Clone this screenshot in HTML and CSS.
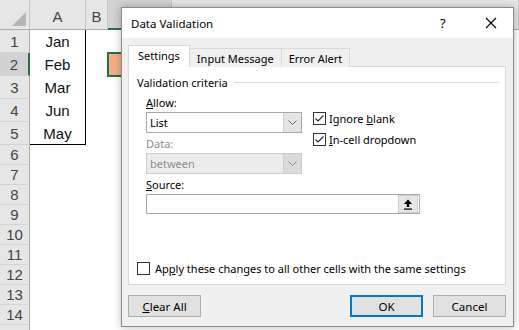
FILE: index.html
```html
<!DOCTYPE html>
<html>
  <head>
    <meta charset="utf-8" />
    <title>Data Validation</title>
    <link rel="stylesheet" href="styles.css">
  </head>
  <body>
    <div class="sheet">
      <div class="row head">
        <div class="corner"><span class="corner-mark"></span></div>
        <div class="colhead">A</div>
        <div class="colhead">B</div>
        <div class="colhead sel"></div>
        <div class="colhead"></div>
      </div>
      <div class="row tall">
        <div class="rowhead">1</div><div class="cell list">Jan</div><div class="cell"></div><div class="cell"></div>
      </div>
      <div class="row tall">
        <div class="rowhead sel">2</div><div class="cell list">Feb</div><div class="cell"></div><div class="cell active"></div>
      </div>
      <div class="row tall">
        <div class="rowhead">3</div><div class="cell list">Mar</div><div class="cell"></div><div class="cell"></div>
      </div>
      <div class="row tall">
        <div class="rowhead">4</div><div class="cell list">Jun</div><div class="cell"></div><div class="cell"></div>
      </div>
      <div class="row tall">
        <div class="rowhead">5</div><div class="cell list last">May</div><div class="cell"></div><div class="cell"></div>
      </div>
      <div class="row"><div class="rowhead">6</div></div>
      <div class="row"><div class="rowhead">7</div></div>
      <div class="row"><div class="rowhead">8</div></div>
      <div class="row"><div class="rowhead">9</div></div>
      <div class="row"><div class="rowhead">10</div></div>
      <div class="row"><div class="rowhead">11</div></div>
      <div class="row"><div class="rowhead">12</div></div>
      <div class="row"><div class="rowhead">13</div></div>
      <div class="row"><div class="rowhead">14</div></div>
      <div class="row"><div class="rowhead"></div></div>
    </div>

    <div class="dialog">
      <div class="titlebar">
        <span class="title">Data Validation</span>
        <span class="help">?</span>
        <span class="close">
          <svg width="12" height="12" viewBox="0 0 12 12"><path d="M1 1 L11 11 M11 1 L1 11" stroke="#000" stroke-width="1.1" fill="none"/></svg>
        </span>
      </div>
      <div class="content">
        <div class="tabs">
          <div class="tab active">Settings</div>
          <div class="tab">Input Message</div>
          <div class="tab">Error Alert</div>
        </div>
        <div class="panel">
          <div class="group-title"><span>Validation criteria</span><span class="rule"></span></div>
          <div class="criteria">
            <div class="fields">
              <div class="label"><u>A</u>llow:</div>
              <div class="select">
                <span class="value">List</span>
                <span class="arrow"><svg width="9" height="5" viewBox="0 0 9 5"><path d="M0.5 0.5 L4.5 4.5 L8.5 0.5" stroke="#606060" fill="none"/></svg></span>
              </div>
              <div class="label disabled">Data:</div>
              <div class="select disabled">
                <span class="value">between</span>
                <span class="arrow"><svg width="9" height="5" viewBox="0 0 9 5"><path d="M0.5 0.5 L4.5 4.5 L8.5 0.5" stroke="#8a8a8a" fill="none"/></svg></span>
              </div>
            </div>
            <div class="checks">
              <label class="check">
                <span class="box"><svg width="11" height="11" viewBox="0 0 11 11"><path d="M1.5 5.5 L4 8 L9.5 2.5" stroke="#222" stroke-width="1.1" fill="none"/></svg></span>
                <span>Ignore <u>b</u>lank</span>
              </label>
              <label class="check">
                <span class="box"><svg width="11" height="11" viewBox="0 0 11 11"><path d="M1.5 5.5 L4 8 L9.5 2.5" stroke="#222" stroke-width="1.1" fill="none"/></svg></span>
                <span><u>I</u>n-cell dropdown</span>
              </label>
            </div>
          </div>
          <div class="source">
            <div class="label"><u>S</u>ource:</div>
            <div class="input">
              <span class="pick">
                <svg width="10" height="11" viewBox="0 0 10 11"><path d="M5 0.5 L9 5 L6.2 5 L6.2 8 L3.8 8 L3.8 5 L1 5 Z" fill="#000"/><rect x="1" y="9.5" width="8" height="1.2" fill="#000"/></svg>
              </span>
            </div>
          </div>
          <label class="check apply">
            <span class="box"></span>
            <span>Ap<u>p</u>ly these changes to all other cells with the same settings</span>
          </label>
        </div>
        <div class="buttons">
          <button class="btn"><u>C</u>lear All</button>
          <span class="spacer"></span>
          <button class="btn default">OK</button>
          <button class="btn">Cancel</button>
        </div>
      </div>
    </div>
  </body>
</html>
```

FILE: styles.css
```css
body {
  margin: 0;
  width: 519px;
  height: 330px;
  overflow: hidden;
  position: relative;
  background: #fff;
  font-family: "Liberation Sans", Arial, sans-serif;
}

/* spreadsheet */
.row {
  display: grid;
  grid-template-columns: 30px 56px 22px 64px 1fr;
  height: 20px;
}
.row.head {
  height: 30px;
}
.row.tall {
  height: 23px;
}
.corner,
.colhead,
.rowhead {
  background: #e6e6e6;
  color: #444;
  box-sizing: border-box;
}
.corner {
  border-right: 1px solid #c6c6c6;
  border-bottom: 1px solid #ababab;
  position: relative;
}
.corner-mark {
  position: absolute;
  right: 3px;
  bottom: 3px;
  width: 0;
  height: 0;
  border-left: 14px solid transparent;
  border-bottom: 14px solid #b5b5b5;
}
.colhead {
  border-right: 1px solid #c6c6c6;
  border-bottom: 1px solid #ababab;
  display: flex;
  align-items: center;
  justify-content: center;
  font-size: 15px;
  padding-top: 3px;
}
.colhead.sel {
  background: #d2d2d2;
  border-bottom: 2px solid #217346;
}
.rowhead {
  border-right: 1px solid #ababab;
  border-bottom: 1px solid #d4d4d4;
  display: flex;
  align-items: center;
  justify-content: center;
  font-size: 15px;
}
.rowhead.sel {
  background: #d2d2d2;
  border-right: 2px solid #217346;
}
.cell {
  box-sizing: border-box;
}
.cell.list {
  border-right: 1px solid #000;
  display: flex;
  align-items: center;
  justify-content: center;
  font-size: 15px;
  color: #111;
}
.cell.list.last {
  border-bottom: 1px solid #000;
}
.cell.active {
  background: #f4b084;
  border: 2px solid #217346;
  margin: -1px 0 -1px -1px;
}

/* dialog */
.dialog {
  position: absolute;
  left: 121px;
  top: 7px;
  width: 393px;
  height: 320px;
  box-sizing: border-box;
  border: 1px solid #8c8c8c;
  background: #f0f0f0;
  box-shadow: 0 0 8px rgba(0, 0, 0, 0.28);
  display: flex;
  flex-direction: column;
  font-family: "Noto Sans", sans-serif;
  font-size: 11px;
  color: #000;
}
.titlebar {
  height: 30px;
  flex: none;
  background: #fff;
  display: flex;
  align-items: center;
  padding-left: 9px;
  font-size: 11.5px;
}
.title {
  flex: 1;
}
.help {
  width: 14px;
  margin-right: 31px;
  font-size: 13px;
}
.close {
  width: 12px;
  height: 12px;
  margin-right: 16px;
  display: flex;
}
.content {
  flex: 1;
  padding: 7px 7px 0 6px;
  display: flex;
  flex-direction: column;
}
.tabs {
  display: flex;
  align-items: flex-end;
  height: 22px;
  position: relative;
  z-index: 1;
  margin-bottom: -1px;
}
.tab {
  height: 19px;
  box-sizing: border-box;
  padding: 0 7px;
  border: 1px solid #d9d9d9;
  border-bottom: none;
  background: #f0f0f0;
  display: flex;
  align-items: center;
  margin-left: -1px;
}
.tab.active {
  height: 22px;
  background: #fff;
  padding: 0 9px;
  margin-left: 0;
  border-bottom: 1px solid #fff;
  padding-bottom: 2px;
}
.panel {
  height: 219px;
  box-sizing: border-box;
  background: #fff;
  border: 1px solid #d9d9d9;
  padding: 7px 8px 5px 8px;
  display: flex;
  flex-direction: column;
}
.group-title {
  display: flex;
  align-items: center;
  gap: 6px;
  height: 16px;
}
.rule {
  flex: 1;
  height: 1px;
  background: #dcdcdc;
  margin-right: -2px;
}
.criteria {
  display: flex;
  gap: 11px;
  padding-left: 9px;
  margin-top: 5px;
}
.fields {
  width: 156px;
}
.label {
  height: 16px;
  line-height: 16px;
  margin-bottom: 1px;
}
.label.disabled {
  color: #8d8d8d;
  margin-top: 3px;
}
.select {
  height: 21px;
  box-sizing: border-box;
  border: 1px solid #a8a8a8;
  display: flex;
  background: #fff;
}
.select .value {
  flex: 1;
  padding-left: 3px;
  line-height: 19px;
}
.select .arrow {
  width: 17px;
  background: #e5e5e5;
  border-left: 1px solid #cfcfcf;
  display: flex;
  align-items: center;
  justify-content: center;
}
.select.disabled {
  background: #ececec;
  border-color: #cccccc;
  color: #8d8d8d;
}
.select.disabled .arrow {
  background: #dadada;
}
.checks {
  margin-top: 13px;
}
.check {
  display: flex;
  align-items: center;
  gap: 3px;
  height: 21px;
}
.box {
  width: 13px;
  height: 13px;
  box-sizing: border-box;
  border: 1px solid #333;
  display: flex;
  align-items: center;
  justify-content: center;
  background: #fff;
}
.source {
  padding-left: 9px;
  margin-top: 3px;
}
.input {
  width: 274px;
  height: 20px;
  box-sizing: border-box;
  border: 1px solid #a8a8a8;
  display: flex;
  justify-content: flex-end;
  align-items: center;
  padding-right: 1px;
}
.pick {
  width: 18px;
  height: 16px;
  background: #e5e5e5;
  border: 1px solid #cfcfcf;
  display: flex;
  align-items: center;
  justify-content: center;
}
.apply {
  margin-top: auto;
  gap: 5px;
}
.buttons {
  display: flex;
  gap: 10px;
  margin-top: 10px;
}
.spacer {
  flex: 1;
}
.btn {
  width: 73px;
  height: 22px;
  box-sizing: border-box;
  border: 1px solid #adadad;
  background: #e1e1e1;
  font-family: "Noto Sans", sans-serif;
  font-size: 11.5px;
  color: #000;
  padding: 0;
}
.btn.default {
  border: 2px solid #0078d7;
}
```
